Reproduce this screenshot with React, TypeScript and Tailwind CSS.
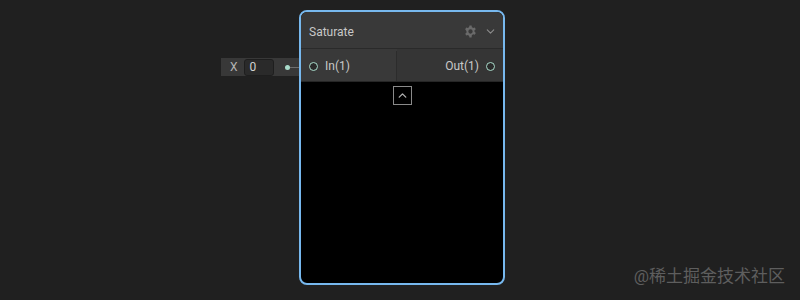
import { ChevronDown, ChevronUp } from "lucide-react";

function Gear() {
  return (
    <svg width="13" height="13" viewBox="0 0 24 24" fill="#6a6a6a">
      <path d="M10 1h4l.6 3.1a8 8 0 0 1 2.2 1.3l3-1 2 3.4-2.4 2.1a8 8 0 0 1 0 2.6l2.4 2.1-2 3.4-3-1a8 8 0 0 1-2.2 1.3L14 23h-4l-.6-3.1a8 8 0 0 1-2.2-1.3l-3 1-2-3.4 2.4-2.1a8 8 0 0 1 0-2.6L2.2 7.8l2-3.4 3 1a8 8 0 0 1 2.2-1.3zM12 8a4 4 0 1 0 0 8 4 4 0 0 0 0-8z" />
    </svg>
  );
}

function Port() {
  return <span className="block w-[9px] h-[9px] rounded-full border-[1.5px] border-[#a9dccb] bg-[#2a2a2a]" />;
}

export default function App() {
  return (
    <div
      className="relative w-[800px] h-[300px] bg-[#202020] overflow-hidden"
      style={{ fontFamily: "Roboto, 'Noto Sans', 'Noto Sans CJK SC', sans-serif" }}
    >
      <div className="flex items-start pl-[221px] pt-[10px]">
        {/* inline input */}
        <div className="mt-[48px] flex items-center w-[78px] h-[18px] bg-[#383838] relative">
          <span className="ml-[9px] text-[12px] text-[#b4b4b4] leading-none">X</span>
          <div className="ml-[6px] w-[30px] h-[17px] bg-[#2a2a2a] border border-[#1e1e1e] rounded-[3px] flex items-center pl-[5px]">
            <span className="text-[12px] text-[#d2d2d2] leading-none">0</span>
          </div>
          <span className="absolute left-[64px] top-[7px] w-[5px] h-[5px] rounded-full bg-[#a9dccb]" />
          <span className="absolute left-[69px] top-[9px] w-[24px] h-[1px] bg-[#6e6e6e]" />
        </div>

        {/* node */}
        <div className="w-[206px] h-[275px] rounded-[8px] border-2 border-[#77b8ee] bg-black overflow-hidden flex flex-col relative z-10">
          <div className="h-[37px] pt-[3px] bg-[#393939] border-b border-[#2a2a2a] flex items-center px-[8px]">
            <span className="text-[12px] text-[#c8c8c8] flex-1">Saturate</span>
            <Gear />
            <ChevronDown size={13} color="#8c8c8c" strokeWidth={2} className="ml-[7px] -mr-[2px]" />
          </div>
          <div className="h-[33px] pt-[2px] flex border-b border-[#262626] bg-[#393939]">
            <div className="w-[96px] flex items-center pl-[8px] gap-[7px] border-r border-[#2c2c2c]">
              <Port />
              <span className="text-[12px] text-[#c8c8c8]">In(1)</span>
            </div>
            <div className="flex-1 bg-[#353535] -mt-[2px] pt-[2px] flex items-center justify-end pr-[8px] gap-[7px]">
              <span className="text-[12px] text-[#c8c8c8]">Out(1)</span>
              <Port />
            </div>
          </div>
          <div className="flex-1 flex justify-center pt-[4px]">
            <div className="w-[19px] h-[19px] border border-[#8a8a8a] flex items-center justify-center">
              <ChevronUp size={13} color="#b0b0b0" strokeWidth={2.5} />
            </div>
          </div>
        </div>
      </div>

      <div className="absolute right-[15px] bottom-[15px] text-[17px] leading-none text-[#5e5e5e]">
        @稀土掘金技术社区
      </div>
    </div>
  );
}
